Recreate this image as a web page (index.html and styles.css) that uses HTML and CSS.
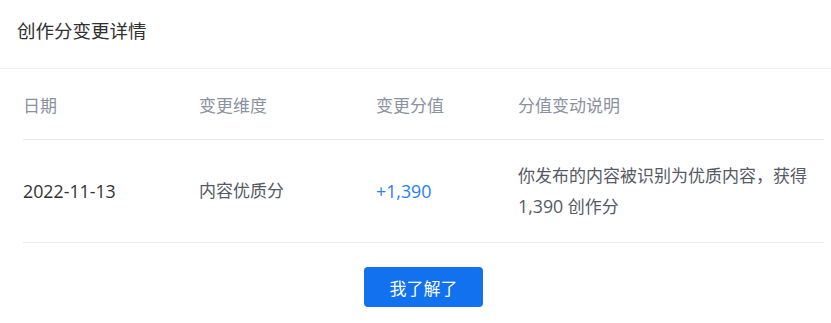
FILE: index.html
```html
<!DOCTYPE html>
<html lang="zh-CN">
<head>
    <meta charset="UTF-8">
    <title>创作分变更详情</title>
    <link rel="stylesheet" href="styles.css">
</head>
<body>

<div class="dialog">
    <div class="dialog-header">创作分变更详情</div>

    <div class="dialog-body">
        <table class="score-table">
            <thead>
            <tr>
                <th class="col-date">日期</th>
                <th class="col-type">变更维度</th>
                <th class="col-score">变更分值</th>
                <th class="col-desc">分值变动说明</th>
            </tr>
            </thead>
            <tbody>
            <tr>
                <td class="col-date num">2022-11-13</td>
                <td class="col-type">内容优质分</td>
                <td class="col-score num score-up">+1,390</td>
                <td class="col-desc">你发布的内容被识别为优质内容，获得 <span class="num">1,390</span> 创作分</td>
            </tr>
            </tbody>
        </table>

        <div class="dialog-footer">
            <button class="btn-primary">我了解了</button>
        </div>
    </div>
</div>

</body>
</html>
```

FILE: styles.css
```css
body {
    margin: 0;
    background: #fff;
    font-family: "Open Sans", "Noto Sans CJK SC", sans-serif;
    color: #333;
}
.dialog-header {
    padding: 18px 17px 0;
    height: 50px;
    font-size: 18.5px;
    line-height: 26px;
    color: #303030;
    border-bottom: 1px solid #f0f1f4;
}
.dialog-body {
    padding: 0 7px 16px 23px;
}
.score-table {
    width: 100%;
    border-collapse: collapse;
    table-layout: fixed;
    font-size: 17px;
}
.score-table th,
.score-table td {
    padding: 0;
    text-align: left;
    vertical-align: middle;
    border-bottom: 1px solid #e8e9ed;
}
.score-table th {
    height: 70px;
    font-weight: normal;
    color: #8a919f;
}
.score-table td {
    height: 102px;
    line-height: 30px;
}
.num {
    font-size: 17.8px;
}
.col-date { width: 176px; }
.col-type { width: 177px; }
.col-score { width: 142px; }
.col-desc { padding-right: 8px !important; }
td.col-type,
td.col-desc {
    color: #555a66;
}
.score-up {
    color: #1e80ff;
}
.dialog-footer {
    display: flex;
    justify-content: center;
    padding-top: 24px;
}
.btn-primary {
    width: 119px;
    height: 40px;
    border: none;
    border-radius: 4px;
    background: #1171ee;
    color: #fff;
    font-family: "Noto Sans CJK SC", sans-serif;
    font-size: 17px;
    cursor: pointer;
}
```
